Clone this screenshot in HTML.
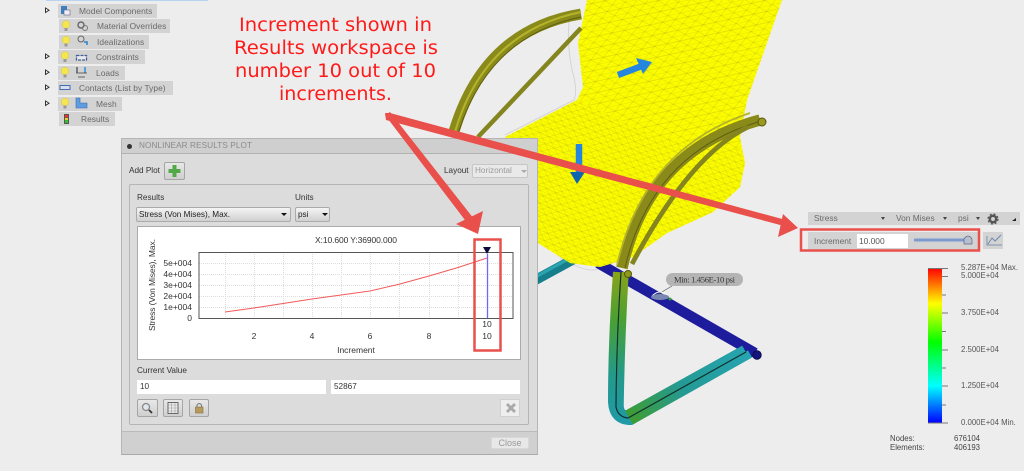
<!DOCTYPE html>
<html><head><meta charset="utf-8"><style>
html,body{margin:0;padding:0;background:#ededed}
#r{position:relative;width:1024px;height:471px;overflow:hidden;background:#ededed;font-family:"Liberation Sans",sans-serif;filter:blur(.35px)}
#r div{position:absolute;box-sizing:border-box;white-space:nowrap}
svg{position:absolute;left:0;top:0}
.row{background:#d3d3d3;color:#696969;font-size:8.4px;line-height:14px;height:14px;letter-spacing:.05px}
.t{color:#333;font-size:8.2px;line-height:11px}
.btn{background:linear-gradient(#e8e8e8,#cfcfcf);border:1px solid #a5a5a5;border-radius:2px}
.sel{background:linear-gradient(#f4f4f4,#d0d0d0);border:1px solid #ababab;border-radius:2px;color:#222;font-size:8.2px;line-height:14px;padding-left:2px}
.inp{background:#fff;color:#333;font-size:8.2px;line-height:14px;padding-left:3px;height:14px}
.lg{color:#555;font-size:7.8px;line-height:10px}
.bar{color:#6a6a6a;font-size:8.4px;line-height:13px}
</style></head><body><div id="r">

<svg width="1024" height="471" viewBox="0 0 1024 471">
<defs>
<pattern id="m1" width="13" height="11" patternUnits="userSpaceOnUse" patternTransform="rotate(-12)">
<rect width="13" height="11" fill="#fcfc00"/><path d="M0 0H13M0 5.500H13M0 0L6.500 5.500L13 0M0 11L6.500 5.500L13 11" stroke="#80801a" stroke-width=".35" stroke-opacity=".55" fill="none"/></pattern>
<pattern id="m2" width="10" height="8" patternUnits="userSpaceOnUse" patternTransform="rotate(25)">
<rect width="10" height="8" fill="#fcfc00"/><path d="M0 0H10M0 4H10M0 0L5 4L10 0M0 8L5 4L10 8" stroke="#80801a" stroke-width=".3" stroke-opacity=".55" fill="none"/></pattern>
<linearGradient id="leg" gradientUnits="userSpaceOnUse" x1="620" y1="262" x2="620" y2="425">
<stop offset="0" stop-color="#98a414"/><stop offset=".35" stop-color="#4aa032"/><stop offset=".7" stop-color="#229a8c"/><stop offset="1" stop-color="#209aa8"/></linearGradient>
<linearGradient id="legb" gradientUnits="userSpaceOnUse" x1="630" y1="420" x2="750" y2="355">
<stop offset="0" stop-color="#3f9c30"/><stop offset=".45" stop-color="#249a94"/><stop offset="1" stop-color="#26a4b2"/></linearGradient>
<linearGradient id="scale" x1="0" y1="0" x2="0" y2="1">
<stop offset="0" stop-color="#f00"/><stop offset=".23" stop-color="#ff0"/><stop offset=".48" stop-color="#0f0"/><stop offset=".76" stop-color="#0ff"/><stop offset="1" stop-color="#00f"/></linearGradient>
</defs>

<!-- ghost outline -->
<path d="M570 12Q566 40 572 70Q578 90 574 100L505 135M560 258Q590 275 600 268" fill="none" stroke="#d4d4d4" stroke-width="1"/>

<!-- base back tubes -->
<path d="M530 283L574 259" stroke="#177f8c" stroke-width="10" fill="none"/>
<path d="M530 280L572 257" stroke="#2aa5b0" stroke-width="3" fill="none"/>
<path d="M598 263L755 353" stroke="#1c1c9c" stroke-width="10.500" fill="none"/>

<!-- seat -->
<path d="M587 0H782L747 100L740 137L745 163L740 187L713 212L667 233L633 257L600 267L570 263L538 243L505 137L577 100L583 87L578 43Z" fill="url(#m1)"/>
<path d="M577 100L657 137L742 150L745 163L740 187L713 212L667 233L633 257L600 267L570 263L538 243L505 137Z" fill="url(#m2)"/>

<!-- load arrows -->
<path d="M618 75L642 66" stroke="#2486de" stroke-width="6.500" fill="none"/>
<path d="M636 58L652 62L643 74Z" fill="#2486de"/>
<path d="M579 144V172" stroke="#2486de" stroke-width="6.500" fill="none"/>
<path d="M570 172H585L577 184Z" fill="#0f66ae"/>

<!-- left arm -->
<path d="M453 135Q483 30 581 14" stroke="#8a8a1a" stroke-width="11" fill="none"/>
<path d="M455 132Q484 32 581 12" stroke="#b4b42c" stroke-width="2" fill="none"/>
<path d="M458 134Q488 36 581 17" stroke="#5e5e12" stroke-width="1" fill="none"/>
<path d="M478 137L581 28" stroke="#85851f" stroke-width="4.500" fill="none"/>

<!-- right arm -->
<path d="M622 268Q648 150 760 120" stroke="#8a8a1a" stroke-width="11.500" fill="none"/>
<path d="M617 265Q644 148 750 113" stroke="#b4b42c" stroke-width="1.800" fill="none"/>
<path d="M625 268Q651 154 758 122" stroke="#5e5e12" stroke-width="1" fill="none"/>
<circle cx="762" cy="122" r="4" fill="#9a9a20" stroke="#55550e"/>
<path d="M632 264Q690 155 748 127" stroke="#85851f" stroke-width="4.800" fill="none"/>

<!-- legs -->
<path d="M617 272Q612 340 612 402Q613 421 631 421L750 354" stroke="url(#leg)" stroke-width="8" fill="none"/>
<path d="M631 421L750 354" stroke="url(#legb)" stroke-width="8" fill="none"/>
<path d="M625 272Q621 340 620 405Q620 414 627 414L744 349" stroke="url(#leg)" stroke-width="7.500" fill="none"/>
<path d="M627 414L744 349" stroke="url(#legb)" stroke-width="7.500" fill="none"/>
<path d="M621 272Q616.500 340 616 407Q618 417 628 418L746 352" stroke="#12302a" stroke-width="1.200" fill="none"/>
<circle cx="757" cy="355" r="4.200" fill="#14147a" stroke="#0c0c50"/>
<circle cx="628" cy="274" r="3.500" fill="#8f9a18" stroke="#55550e"/>

<!-- min tag -->
<path d="M655 296L672 286" stroke="#555" stroke-width=".7"/>
<path d="M652 296Q660 288 668 296" fill="none" stroke="#f6f6f6"/>
<ellipse cx="660" cy="297" rx="9" ry="3" fill="#7a86b0"/>
<circle cx="670" cy="299" r="1.500" fill="#2fa02f"/>
<rect x="666" y="273" width="77" height="13" rx="6.500" fill="#b4b4b4"/>
<text x="674" y="282.500" font-family="Liberation Serif" font-size="8.500" fill="#333" textLength="61">Min: 1.456E-10 psi</text>

<!-- legend -->
<rect x="928" y="268" width="14" height="155" fill="url(#scale)"/>
<path d="M928 268.500H948M942 276.500H948M942 295H946M942 313H948M942 331.500H946M942 350H948M942 368H946M942 386H948M942 405H946M928 423H948" stroke="#777" stroke-width="1"/>
</svg>

<!-- tree -->
<div style="left:46px;top:0;width:162px;height:1px;background:#b7d3f2"></div>
<div class="row" style="left:58px;top:4px;width:99px;padding-left:21px">Model Components</div>
<div class="row" style="left:59px;top:19px;width:111px;padding-left:38px">Material Overrides</div>
<div class="row" style="left:59px;top:35px;width:90px;padding-left:38px">Idealizations</div>
<div class="row" style="left:58px;top:50px;width:87px;padding-left:38px">Constraints</div>
<div class="row" style="left:58px;top:66px;width:67px;padding-left:38px">Loads</div>
<div class="row" style="left:58px;top:81px;width:115px;padding-left:21px">Contacts (List by Type)</div>
<div class="row" style="left:58px;top:97px;width:64px;padding-left:38px">Mesh</div>
<div class="row" style="left:59px;top:112px;width:56px;padding-left:22px">Results</div>
<svg width="210" height="130" viewBox="0 0 210 130">
<g fill="#fff" stroke="#333" stroke-width="1"><path d="M45.500 8V12.500L49 10.200Z"/><path d="M45.500 54V58.500L49 56.200Z"/><path d="M45.500 70V74.500L49 72.200Z"/><path d="M45.500 85V89.500L49 87.200Z"/><path d="M45.500 101V105.500L49 103.200Z"/></g>
<g fill="#f5e550" stroke="#d6c440" stroke-width=".5">
<circle cx="66" cy="24.500" r="3.800"/><circle cx="66" cy="40" r="3.800"/><circle cx="65" cy="55.500" r="3.800"/><circle cx="65" cy="71" r="3.800"/><circle cx="65" cy="102" r="3.800"/></g>
<g fill="#999"><rect x="64.500" y="28" width="3" height="3"/><rect x="64.500" y="43.500" width="3" height="3"/><rect x="63.500" y="59" width="3" height="3"/><rect x="63.500" y="74.500" width="3" height="3"/><rect x="63.500" y="105.500" width="3" height="3"/></g>
<rect x="61" y="6" width="6" height="8" fill="#3f7fc0"/><rect x="64" y="10" width="6" height="5" fill="#eef" stroke="#667" stroke-width=".6"/>
<circle cx="81" cy="25" r="3" fill="none" stroke="#666" stroke-width="1.400"/><circle cx="85" cy="28" r="2.500" fill="none" stroke="#777"/>
<circle cx="81" cy="39" r="3" fill="none" stroke="#666"/><path d="M84 42H87V45" stroke="#2a7fd0" stroke-width="1.500" fill="none"/>
<rect x="76.500" y="55.500" width="10" height="4.500" fill="#e8e8ee" stroke="#3e5f8f" stroke-width="1.300" stroke-dasharray="3 1"/>
<path d="M77 67V73M85 67V73" stroke="#222" stroke-width="1"/><path d="M85 67V72" stroke="#2a8fe0" stroke-width="1.500"/><path d="M76 73H87M78 77H85" stroke="#666"/>
<rect x="60" y="85.500" width="10" height="4" fill="#dde" stroke="#3e6fb0"/>
<path d="M76 98H80V103H87V108H76Z" fill="#5f9de0" stroke="#3a6aa8" stroke-width=".6"/>
<rect x="64" y="114" width="5" height="10" fill="#555"/><rect x="65" y="115" width="3" height="2.500" fill="#e33"/><rect x="65" y="118" width="3" height="2" fill="#ec3"/><rect x="65" y="120" width="3" height="3" fill="#3b3"/>
</svg>

<!-- dialog -->
<div style="left:121px;top:138px;width:417px;height:317px;background:#dcdcdc;border:1px solid #b5b5b5;border-bottom:1px solid #aaa"></div>
<div style="left:122px;top:139px;width:415px;height:15px;background:#cfcfcf;border-bottom:1px solid #b2b2b2"></div>
<div style="left:127px;top:144px;width:5px;height:5px;border-radius:50%;background:#333"></div>
<div style="left:139px;top:140px;color:#8b8b8b;font-size:8.200px;line-height:12px;letter-spacing:.1px">NONLINEAR RESULTS PLOT</div>
<div class="t" style="left:129px;top:165px">Add Plot</div>
<div class="btn" style="left:164px;top:162px;width:21px;height:18px"></div>
<svg width="1024" height="471" viewBox="0 0 1024 471"><path d="M174.500 165V177M168.500 171H180.500" stroke="#55a84a" stroke-width="4"/></svg>
<div class="t" style="left:444px;top:165px">Layout</div>
<div style="left:472px;top:164px;width:56px;height:14px;background:#e9e9e9;border:1px solid #c6c6c6;border-radius:2px;color:#999;font-size:8.200px;line-height:12px;padding-left:2px">Horizontal</div>
<div style="left:521px;top:170px;border:3px solid transparent;border-top:3px solid #aaa"></div>
<div style="left:129px;top:184px;width:400px;height:241px;border:1px solid #b5b5b5;border-radius:2px"></div>
<div class="t" style="left:137px;top:192px">Results</div>
<div class="t" style="left:295px;top:192px">Units</div>
<div class="sel" style="left:136px;top:207px;width:155px;height:15px">Stress (Von Mises), Max.</div>
<div style="left:281px;top:213px;border:3px solid transparent;border-top:3px solid #111"></div>
<div class="sel" style="left:295px;top:207px;width:35px;height:15px">psi</div>
<div style="left:322px;top:213px;border:3px solid transparent;border-top:3px solid #111"></div>

<!-- chart -->
<div style="left:137px;top:226px;width:384px;height:134px;background:#fff;border:1px solid #aaa"></div>
<svg width="1024" height="471" viewBox="0 0 1024 471">
<path d="M225.500 252V318M254.500 252V318M283.500 252V318M312.500 252V318M341.500 252V318M370.500 252V318M399.500 252V318M429.500 252V318M458.500 252V318M199 263.500H513M199 274.500H513M199 285.500H513M199 296.500H513M199 307.500H513" stroke="#ddd" stroke-width="1" stroke-dasharray="1 1"/>
<rect x="199" y="252.500" width="314" height="66" fill="none" stroke="#555"/>
<path d="M225 312L254 308L283 303.500L312 299L341 295L370 291L400 284L429 276L458 267.500L487 258" fill="none" stroke="#f45a5a" stroke-width="1"/>
<path d="M487.500 254V318" stroke="#6a6af8" stroke-width="1.300"/>
<path d="M483 247H491L487 254Z" fill="#0b0b3a"/>
<g font-family="Liberation Sans" font-size="8.500" fill="#333">
<text x="315" y="243" textLength="82">X:10.600 Y:36900.000</text>
<g text-anchor="end"><text x="192" y="266">5e+004</text><text x="192" y="277">4e+004</text><text x="192" y="288">3e+004</text><text x="192" y="299">2e+004</text><text x="192" y="310">1e+004</text><text x="192" y="321">0</text></g>
<g text-anchor="middle"><text x="254" y="339">2</text><text x="312" y="339">4</text><text x="370" y="339">6</text><text x="429" y="339">8</text><text x="487" y="327">10</text><text x="487" y="339">10</text><text x="356" y="353">Increment</text></g>
<text transform="translate(155 331) rotate(-90)" textLength="92">Stress (Von Mises), Max.</text>
</g></svg>

<div class="t" style="left:137px;top:365px">Current Value</div>
<div class="inp" style="left:137px;top:380px;width:189px">10</div>
<div class="inp" style="left:331px;top:380px;width:189px">52867</div>
<div class="btn" style="left:137px;top:399px;width:21px;height:18px"></div>
<div class="btn" style="left:163px;top:399px;width:20px;height:18px"></div>
<div class="btn" style="left:189px;top:399px;width:20px;height:18px"></div>
<div style="left:500px;top:399px;width:20px;height:18px;background:#eee;border:1px solid #d0d0d0"></div>
<svg width="1024" height="471" viewBox="0 0 1024 471">
<circle cx="146" cy="407" r="3.500" fill="#dfe6ee" stroke="#888" stroke-width="1.300"/><path d="M149 410L152 413" stroke="#333" stroke-width="1.800"/>
<rect x="168" y="402.500" width="10" height="11" fill="#eee" stroke="#666"/><path d="M168 405H178M168 408H178M168 411H178M171.500 403V413M175 403V413" stroke="#999" stroke-width=".6"/>
<rect x="195.500" y="407" width="7.500" height="6" fill="#b89a5a" stroke="#807040" stroke-width=".6"/><path d="M197 407V405Q199.200 402 201.500 405V407" fill="none" stroke="#777"/>
<path d="M507 404L515 412M515 404L507 412" stroke="#aaa" stroke-width="3"/></svg>
<div style="left:122px;top:431px;width:415px;height:23px;background:#d0d0d0;border-top:1px solid #bbb"></div>
<div style="left:491px;top:437px;width:38px;height:12px;background:#e8e8e8;border:1px solid #d8d8d8;color:#999;font-size:9px;line-height:11px;text-align:center">Close</div>

<!-- results bar -->
<div style="left:808px;top:212px;width:212px;height:13px;background:#d3d3d3"></div>
<div class="bar" style="left:814px;top:212px">Stress</div>
<div class="bar" style="left:896px;top:212px">Von Mises</div>
<div class="bar" style="left:958px;top:212px">psi</div>
<div style="left:881px;top:217px;border:2.500px solid transparent;border-top:3px solid #444"></div>
<div style="left:943px;top:217px;border:2.500px solid transparent;border-top:3px solid #444"></div>
<div style="left:976px;top:217px;border:2.500px solid transparent;border-top:3px solid #444"></div>
<div style="left:808px;top:232px;width:172px;height:18px;background:#d3d3d3"></div>
<div style="left:983px;top:232px;width:20px;height:17px;background:#d3d3d3"></div>
<div class="bar" style="left:814px;top:234px;line-height:14px">Increment</div>
<div class="bar" style="left:857px;top:234px;width:51px;height:14px;background:#fff;line-height:14px;padding-left:2px;color:#555">10.000</div>
<svg width="1024" height="471" viewBox="0 0 1024 471">
<circle cx="993" cy="219" r="3.200" fill="none" stroke="#555" stroke-width="2.500"/><circle cx="993" cy="219" r="5" fill="none" stroke="#555" stroke-width="1.200" stroke-dasharray="2 2"/>
<path d="M1012 221H1016V218Z" fill="#222"/>
<path d="M914 240H967" stroke="#7c9ad2" stroke-width="3"/>
<path d="M964 244V239Q968 233 972 239V244Z" fill="#b5c0d0" stroke="#667" stroke-width=".7"/>
<path d="M987 236V245H1002" stroke="#7f95ad" fill="none"/><path d="M988 244L992 238L995 241L1001 235" stroke="#6a8ab0" fill="none"/>
</svg>

<!-- legend labels -->
<div class="lg" style="left:961px;top:263px">5.287E+04 Max.</div>
<div class="lg" style="left:961px;top:271px">5.000E+04</div>
<div class="lg" style="left:961px;top:308px">3.750E+04</div>
<div class="lg" style="left:961px;top:345px">2.500E+04</div>
<div class="lg" style="left:961px;top:381px">1.250E+04</div>
<div class="lg" style="left:961px;top:418px">0.000E+04 Min.</div>
<div class="lg" style="left:890px;top:434px;color:#444">Nodes:</div>
<div class="lg" style="left:890px;top:443px;color:#444">Elements:</div>
<div class="lg" style="left:954px;top:434px;color:#444">676104</div>
<div class="lg" style="left:954px;top:443px;color:#444">406193</div>

<!-- annotations -->
<svg width="1024" height="471" viewBox="0 0 1024 471">
<g fill="#e9504b"><path d="M385 113L390 113L786 220L784 226L386 120Z"/>
<path d="M783 214L798 228L778 237Z"/>
<path d="M385 115L390 112L474 219L468 224Z"/>
<path d="M483 211L478 234L456 224Z"/></g>
<g fill="none" stroke="#e9504b" stroke-width="2.500"><rect x="474.500" y="239.500" width="26" height="111"/><rect x="801" y="229.500" width="178" height="21"/></g>
<g font-family="DejaVu Sans" font-size="18.500" fill="#ff1a1a">
<text x="239" y="31" textLength="193" lengthAdjust="spacingAndGlyphs">Increment shown in</text>
<text x="234" y="54" textLength="204" lengthAdjust="spacingAndGlyphs">Results workspace is</text>
<text x="235" y="77" textLength="201" lengthAdjust="spacingAndGlyphs">number 10 out of 10</text>
<text x="279" y="100" textLength="113" lengthAdjust="spacingAndGlyphs">increments.</text>
</g></svg>
</div></body></html>
